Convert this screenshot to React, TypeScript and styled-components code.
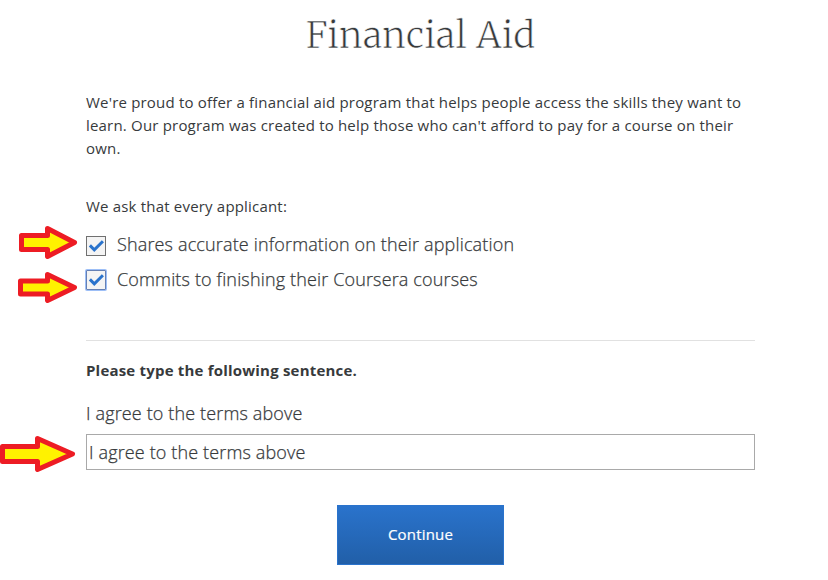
import React from 'react';
import styled, { createGlobalStyle } from 'styled-components';

const GlobalStyle = createGlobalStyle`
  * { box-sizing: border-box; }
  body { margin: 0; background: #fff; color: #373a3c; font-family: "Open Sans", sans-serif; overflow: hidden; }
`;

const Page = styled.main`
  position: relative;
  width: 828px;
  height: 580px;
  padding: 0 73px 0 86px;
  display: flex;
  flex-direction: column;
  overflow: hidden;
`;

const Title = styled.h1`
  margin: 12px 0 0;
  height: 48px;
  line-height: 48px;
  font-family: "Merriweather Light", Merriweather, "Noto Serif", "Liberation Serif", serif;
  font-size: 36px;
  font-weight: 300;
  letter-spacing: 0.45px;
  text-align: center;
  white-space: nowrap;
  -webkit-text-stroke: 0.5px #fff;
`;

const Intro = styled.p`
  margin: 31px 0 0;
  font-size: 15px;
  line-height: 23px;
  letter-spacing: 0.19px;
  white-space: nowrap;
`;

const Ask = styled(Intro)`
  margin-top: 35px;
`;

const CheckRow = styled.label`
  display: flex;
  align-items: center;
  gap: 11px;
  height: 35px;
  font-size: 18px;
  font-weight: 300;
  letter-spacing: 0.15px;
  -webkit-text-stroke: 0.25px currentColor;
`;

const CheckText = styled.span`
  padding-bottom: 3px;
`;

const Checks = styled.div`
  margin-top: 10px;
  display: flex;
  flex-direction: column;
`;

const Box = styled.span<{ $focused?: boolean }>`
  width: 20px;
  height: 20px;
  margin-bottom: ${p => (p.$focused ? '1px' : '0')};
  display: grid;
  place-items: center;
  background: #f4f4f4;
  border: 1px solid ${p => (p.$focused ? '#6580b4' : '#707070')};
  box-shadow: ${p => (p.$focused ? '0 0 0 1px #9dbff7' : 'none')};
  border-radius: ${p => (p.$focused ? '1px' : '0')};
`;

const Divider = styled.hr`
  width: 669px;
  margin: 42px 0 0;
  border: 0;
  border-top: 1px solid #e1e1e1;
`;

const Prompt = styled.p`
  margin: 18px 0 0;
  font-size: 15px;
  font-weight: 700;
  line-height: 23px;
  letter-spacing: 0.2px;
`;

const Sentence = styled.p`
  margin: 18px 0 0;
  font-size: 18px;
  font-weight: 300;
  line-height: 26px;
  letter-spacing: 0.14px;
  -webkit-text-stroke: 0.25px currentColor;
`;

const Field = styled.input`
  margin-top: 8px;
  width: 669px;
  height: 36px;
  padding: 0 1px 0 2px;
  border: 1px solid #a9a9a9;
  border-radius: 0;
  outline: 0;
  color: #373a3c;
  font: 300 18px "Open Sans", sans-serif;
  letter-spacing: 0.14px;
  -webkit-text-stroke: 0.25px currentColor;
`;

const Continue = styled.button`
  margin: 35px 0 0 251px;
  width: 167px;
  height: 60px;
  padding: 0 0 2px;
  border: 1px solid #2a73cc;
  background: linear-gradient(#2a73cc, #215fa8);
  color: #fff;
  font: 400 15px "Open Sans", sans-serif;
  letter-spacing: 0.2px;
  -webkit-text-stroke: 0.2px currentColor;
`;

const Pointer = styled.svg<{ $x: number; $y: number }>`
  position: absolute;
  left: ${p => p.$x}px;
  top: ${p => p.$y}px;
  overflow: visible;
`;

const Tick = () => (
  <svg width="18" height="18" viewBox="0 0 18 18">
    <path d="M2.9 8.4 7.3 12.8l8.6-8.6" fill="none" stroke="#2a73cc" strokeWidth="3" />
  </svg>
);

type ArrowProps = { x: number; y: number; width: number; height: number; neck: number; shaft: number };

/* Block arrow; width and height are the outer extents, neck is the head's left edge. */
const Arrow = ({ x, y, width, height, neck, shaft }: ArrowProps) => {
  const mid = height / 2;
  const s = shaft / 2 - 2.5;
  const n = neck + 2.5;
  return (
    <Pointer $x={x} $y={y} width={width} height={height} viewBox={`0 0 ${width} ${height}`}>
      <path
        d={`M2.5 ${mid - s}H${n}V2.5L${width - 3.5} ${mid}L${n} ${height - 2.5}V${mid + s}H2.5Z`}
        fill="#fff200"
        stroke="#ed1c24"
        strokeWidth="5"
        strokeLinejoin="round"
      />
    </Pointer>
  );
};

export default function App() {
  return (
    <Page>
      <GlobalStyle />
      <Title>Financial Aid</Title>
      <Intro>We're proud to offer a financial aid program that helps people access the skills they want to<br />learn. Our program was created to help those who can't afford to pay for a course on their<br />own.</Intro>
      <Ask>We ask that every applicant:</Ask>
      <Checks>
        <CheckRow><Box><Tick /></Box><CheckText>Shares accurate information on their application</CheckText></CheckRow>
        <CheckRow><Box $focused><Tick /></Box><CheckText>Commits to finishing their Coursera courses</CheckText></CheckRow>
      </Checks>
      <Divider />
      <Prompt>Please type the following sentence.</Prompt>
      <Sentence>I agree to the terms above</Sentence>
      <Field defaultValue="I agree to the terms above" />
      <Continue>Continue</Continue>
      <Arrow x={19} y={226} width={59} height={33} neck={26} shaft={19} />
      <Arrow x={18} y={272} width={60} height={31} neck={27} shaft={18} />
      <Arrow x={0} y={436} width={76} height={36} neck={35} shaft={20} />
    </Page>
  );
}
